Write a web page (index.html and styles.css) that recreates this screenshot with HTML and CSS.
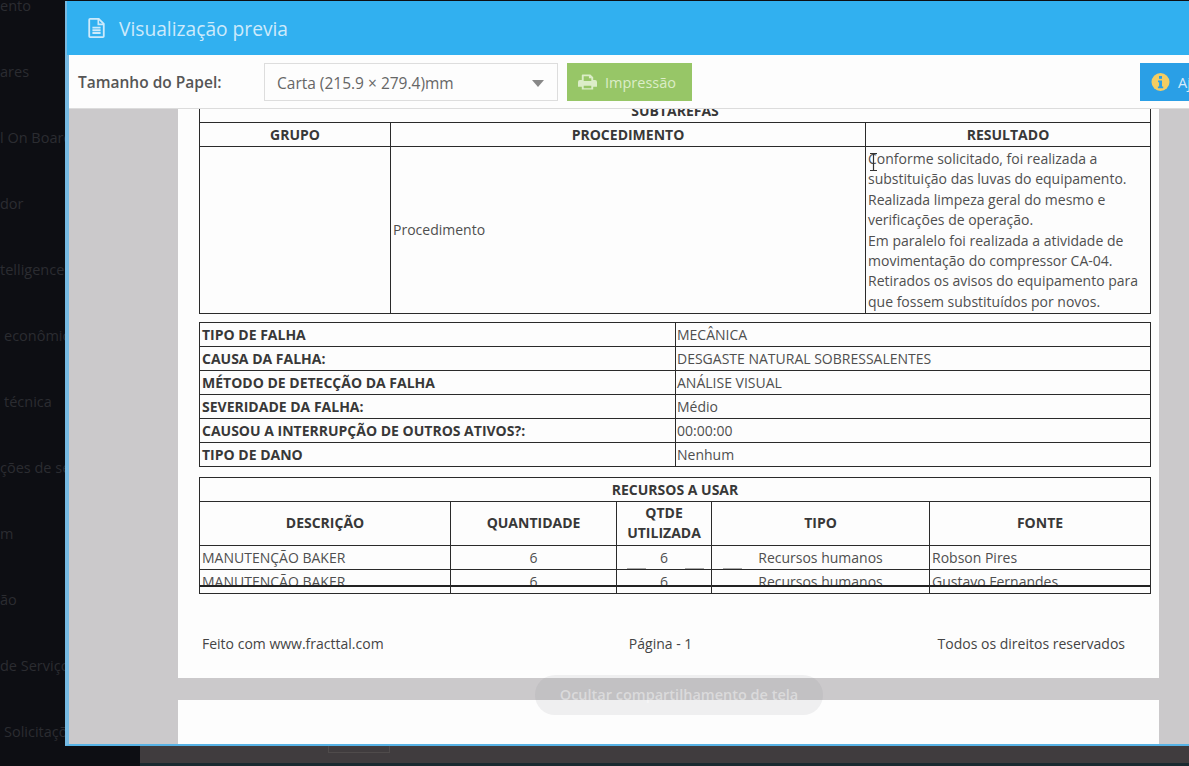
FILE: index.html
```html
<!DOCTYPE html>
<html lang="pt">
  <head>
    <meta charset="UTF-8" />
    <title>Visualização previa</title>
    <link rel="stylesheet" href="styles.css">
  </head>
  <body>
    <div class="app">
      <ul class="sidebar">
        <li>ento</li>
        <li>ares</li>
        <li>l On Board</li>
        <li>dor</li>
        <li>telligence</li>
        <li class="inset">econômica</li>
        <li class="inset">técnica</li>
        <li>ções de serviço</li>
        <li>m</li>
        <li>ão</li>
        <li>de Serviço</li>
        <li class="inset">Solicitações</li>
      </ul>
      <div class="main">
        <div class="statusbar"><span class="statusbar-btn"></span></div>
      </div>
    </div>

    <div class="modal">
      <div class="modal-header">
        <svg class="header-icon" viewBox="0 0 18 22">
          <path d="M2 1h9.500L17 6.500V20a1 1 0 0 1-1 1H2a1 1 0 0 1-1-1V2a1 1 0 0 1 1-1z" fill="none" stroke="currentColor" stroke-width="2"/>
          <path d="M11 1v6h6" fill="none" stroke="currentColor" stroke-width="1.800"/>
          <path d="M4.500 10.500h9M4.500 13.500h9M4.500 16.500h9" stroke="currentColor" stroke-width="2"/>
        </svg>
        <span class="modal-title">Visualização previa</span>
      </div>
      <div class="toolbar">
        <label class="paper-label">Tamanho do Papel:</label>
        <div class="select">
          <span>Carta (215.9 × 279.4)mm</span>
          <i class="select-arrow"></i>
        </div>
        <button class="btn btn-print">
          <svg class="btn-icon" viewBox="0 0 20 18">
            <path d="M5 1h8l3 3v3h2a2 2 0 0 1 2 2v5h-4v3H4v-3H0V9a2 2 0 0 1 2-2h2V2a1 1 0 0 1 1-1zm1 2v5h8V5h-2.500V3zm0 10v2.500h8V13z" fill="currentColor" fill-rule="evenodd"/>
          </svg>
          Impressão
        </button>
        <button class="btn btn-help">
          <svg class="btn-icon" viewBox="0 0 18 18">
            <circle cx="9" cy="9" r="9" fill="#f3cd62"/>
            <rect x="7.500" y="3" width="3" height="2.800" fill="#2a9fe6"/>
            <path d="M6.500 7.500h4v6h1.200v1.700H6.400v-1.700h1.200V9.200H6.500z" fill="#2a9fe6"/>
          </svg>
          Ajuda
        </button>
      </div>

      <div class="preview">
        <div class="page">
          <table class="report cols-tasks">
            <colgroup><col class="c191"><col class="c475"><col></colgroup>
            <tr class="row"><th colspan="3">SUBTAREFAS</th></tr>
            <tr class="row"><th>GRUPO</th><th>PROCEDIMENTO</th><th>RESULTADO</th></tr>
            <tr>
              <td></td>
              <td>Procedimento</td>
              <td class="result">Conforme solicitado, foi realizada a substituição das luvas do equipamento.<br>Realizada limpeza geral do mesmo e verificações de operação.<br>Em paralelo foi realizada a atividade de movimentação do compressor CA-04.<br>Retirados os avisos do equipamento para que fossem substituídos por novos.</td>
            </tr>
          </table>

          <table class="report failure">
            <colgroup><col class="c476"><col></colgroup>
            <tr class="row"><th>TIPO DE FALHA</th><td>MECÂNICA</td></tr>
            <tr class="row"><th>CAUSA DA FALHA:</th><td>DESGASTE NATURAL SOBRESSALENTES</td></tr>
            <tr class="row"><th>MÉTODO DE DETECÇÃO DA FALHA</th><td>ANÁLISE VISUAL</td></tr>
            <tr class="row"><th>SEVERIDADE DA FALHA:</th><td>Médio</td></tr>
            <tr class="row"><th>CAUSOU A INTERRUPÇÃO DE OUTROS ATIVOS?:</th><td>00:00:00</td></tr>
            <tr class="row"><th>TIPO DE DANO</th><td>Nenhum</td></tr>
          </table>

          <div class="resources">
            <table class="report">
              <colgroup><col class="c251"><col class="c166"><col class="c95"><col class="c218"><col></colgroup>
              <tr class="row"><th colspan="5">RECURSOS A USAR</th></tr>
              <tr class="head-tall"><th>DESCRIÇÃO</th><th>QUANTIDADE</th><th>QTDE<br>UTILIZADA</th><th>TIPO</th><th>FONTE</th></tr>
              <tr class="row"><td>MANUTENÇÃO BAKER</td><td class="center">6</td><td class="center">6</td><td class="center">Recursos humanos</td><td>Robson Pires</td></tr>
              <tr class="row cut">
                <td><div>MANUTENÇÃO BAKER</div></td>
                <td class="center"><div>6</div></td>
                <td class="center"><div>6</div></td>
                <td class="center"><div>Recursos humanos</div></td>
                <td><div>Gustavo Fernandes</div></td>
              </tr>
            </table>
            <i class="dash dash-1"></i>
            <i class="dash dash-2"></i>
            <i class="dash dash-3"></i>
          </div>

          <div class="page-footer">
            <span>Feito com www.fracttal.com</span>
            <span>Página - 1</span>
            <span>Todos os direitos reservados</span>
          </div>
        </div>
        <div class="page page-next"></div>
      </div>

      <svg class="text-cursor" viewBox="0 0 9 18">
        <path d="M1 .5h7M4.500.5v17M1 17.500h7" fill="none" stroke="#333" stroke-width="1.200"/>
      </svg>
    </div>

    <div class="share-pill">Ocultar compartilhamento de tela</div>
  </body>
</html>
```

FILE: styles.css
```css
html,
body {
  margin: 0;
  padding: 0;
  height: 100%;
  overflow: hidden;
  font-family: 'Open Sans', 'Noto Sans', sans-serif;
  background: #0d0e13;
}
.app {
  display: flex;
  height: 766px;
}
.sidebar {
  width: 140px;
  flex: none;
  margin: -27px 0 0;
  padding: 0;
  list-style: none;
  overflow: hidden;
  background: #0d0e13;
}
.sidebar li {
  height: 66px;
  line-height: 66px;
  font-size: 14.500px;
  white-space: nowrap;
  color: #2b2c31;
}
.sidebar .inset {
  padding-left: 4px;
}
.main {
  flex: 1;
  display: flex;
  flex-direction: column;
  justify-content: flex-end;
}
.statusbar {
  height: 17px;
  margin-bottom: 3px;
  background: #403c3e;
  box-shadow: 0 3px 0 #1a2a30;
}
.statusbar-btn {
  display: block;
  width: 60px;
  height: 6px;
  margin-left: 188px;
  border: 1px solid #4f4b4b;
  border-top: 0;
}

/* modal */
.modal {
  position: absolute;
  left: 65px;
  top: 1px;
  width: 1205px;
  height: 745px;
  display: flex;
  flex-direction: column;
  box-sizing: border-box;
  border-left: 4px solid #76b9e2;
  border-bottom: 2px solid #57b3e6;
  background: #cbc9cb;
}
.modal-header {
  flex: none;
  display: flex;
  align-items: center;
  height: 54px;
  margin-left: -2px;
  padding-left: 21px;
  color: #cdeafb;
  background: #31b0f0;
}
.header-icon {
  width: 17px;
  height: 20px;
  margin-right: 14px;
}
.modal-title {
  font-size: 19.200px;
  font-weight: 500;
}
.toolbar {
  flex: none;
  display: flex;
  align-items: center;
  height: 54px;
  box-sizing: border-box;
  padding: 1px 0 0 9px;
  border-bottom: 1px solid #dcdcdc;
  background: #fdfdfd;
}
.paper-label {
  width: 186px;
  font-size: 15.500px;
  font-weight: 600;
  color: #555;
}
.select {
  display: flex;
  align-items: center;
  justify-content: space-between;
  width: 294px;
  height: 38px;
  box-sizing: border-box;
  padding: 2px 13px 0 12px;
  border: 1px solid #ddd;
  font-size: 15.500px;
  color: #666;
}
.select-arrow {
  border: 6px solid transparent;
  border-top: 7px solid #888;
  border-bottom: 0;
}
.btn {
  display: flex;
  align-items: center;
  height: 38px;
  padding: 0;
  border: 0;
  font-family: inherit;
  font-size: 14.500px;
}
.btn-icon {
  width: 19px;
  height: 18px;
  margin-right: 8px;
}
.btn-print {
  width: 125px;
  margin-left: 9px;
  padding-left: 11px;
  color: #dcedc8;
  background: #97c667;
}
.btn-help {
  width: 90px;
  margin-left: auto;
  margin-right: 40px;
  padding-left: 11px;
  color: #d5ecfb;
  background: #2a9fe6;
}
.preview {
  flex: 1;
  min-height: 0;
  overflow: hidden;
}
.page {
  width: 981px;
  height: 580px;
  box-sizing: border-box;
  margin: -11px 0 22px 109px;
  padding-left: 21px;
  background: #fdfdfd;
}
.page-next {
  height: 60px;
  margin-top: 0;
}

/* report tables */
.report {
  width: 952px;
  table-layout: fixed;
  border-collapse: collapse;
  font-size: 14px;
  line-height: 19px;
  color: #4f4f4f;
}
.report th,
.report td {
  padding: 0 2px 1px;
  border: 1px solid #2a2a2a;
  white-space: nowrap;
  overflow: hidden;
  font-weight: 400;
}
.report th {
  font-weight: 700;
  color: #383838;
}
.report td.result {
  height: 165px;
  padding: 1px 2px 0;
  white-space: normal;
  line-height: 20.400px;
}
.row th,
.row td {
  height: 22px;
}
.report .head-tall th {
  height: 41px;
  padding-bottom: 2px;
  line-height: 20px;
}
.center {
  text-align: center;
}
.failure {
  margin-top: 8px;
}
.failure th {
  text-align: left;
}
.failure td {
  padding-left: 1px;
}
.c191 { width: 191px; }
.c475 { width: 475px; }
.c476 { width: 476px; }
.c251 { width: 251px; }
.c166 { width: 166px; }
.c95 { width: 95px; }
.c218 { width: 218px; }

.resources {
  position: relative;
  margin-top: 10px;
}
.report .cut td {
  height: 23px;
  vertical-align: top;
  padding: 0;
}
.cut div {
  height: 15px;
  margin: 0 -1px;
  padding: 0 3px;
  overflow: hidden;
  line-height: 23px;
  border-bottom: 2px solid #222;
}
.dash {
  position: absolute;
  top: 91px;
  height: 1px;
  width: 19px;
  background: #aaa;
}
.dash-1 { left: 428px; }
.dash-2 { left: 486px; }
.dash-3 { left: 524px; }

.page-footer {
  display: flex;
  justify-content: space-between;
  width: 923px;
  margin: 40px 0 0 3px;
  font-size: 14px;
  color: #444;
}

.text-cursor {
  position: absolute;
  left: 800px;
  top: 152px;
  width: 9px;
  height: 18px;
}
.share-pill {
  position: absolute;
  left: 535px;
  top: 675px;
  width: 288px;
  height: 40px;
  border-radius: 20px;
  background: rgba(130, 130, 135, 0.11);
  color: rgba(255, 255, 255, 0.42);
  font-size: 14.500px;
  font-weight: 600;
  line-height: 40px;
  text-align: center;
}
```
